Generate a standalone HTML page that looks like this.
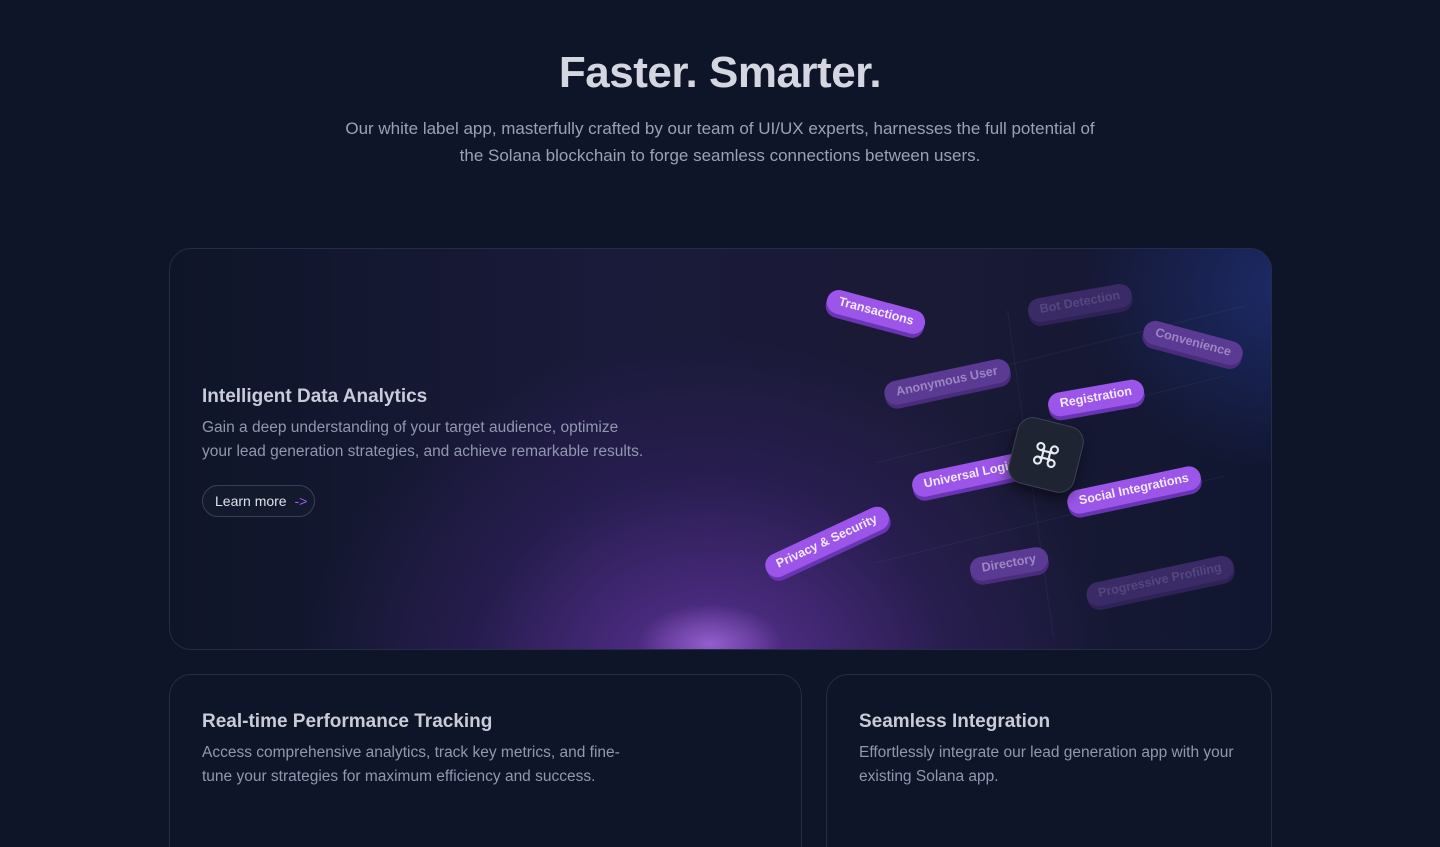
<!DOCTYPE html>
<html><head><meta charset="utf-8"><style>
*{margin:0;padding:0;box-sizing:border-box}
html,body{width:1440px;height:847px;overflow:hidden}
body{background:#0f1528;font-family:"Liberation Sans",Arial,sans-serif;position:relative}
h1{position:absolute;top:48px;left:0;width:1440px;text-align:center;font-size:44px;font-weight:700;color:#d4d6e2;letter-spacing:-0.5px}
.sub{position:absolute;top:115px;left:0;width:1440px;text-align:center;font-size:17px;line-height:27px;color:#9aa0b8}
.card{position:absolute;border:1px solid #262c44;border-radius:22px;overflow:hidden;background:#0f1528}
.big{left:169px;top:248px;width:1103px;height:402px;
background:
radial-gradient(ellipse 300px 260px at 1120px 40px,rgba(40,60,150,.55),transparent 70%),
radial-gradient(ellipse 90px 50px at 540px 395px,rgba(180,120,240,.65),transparent 80%),
radial-gradient(ellipse 480px 400px at 540px 430px,rgba(110,55,175,.8),rgba(60,35,115,.4) 50%,transparent 85%),
linear-gradient(90deg,#0f1528 0%,#1a1a3a 40%,#1a1a36 70%,#101630 100%)}
.t{position:absolute;font-weight:700;font-size:19px;color:#c9cbd8}
.d{position:absolute;font-size:15.5px;line-height:24px;color:#9297b0}
.btn{position:absolute;left:32px;top:236px;width:113px;height:32px;border:1px solid #3a3f58;border-radius:16px;color:#e0e2ea;font-size:14px;line-height:30px;padding-left:12px;background:#131a2e}
.btn span{color:#9b5cf0;margin-left:4px}
.pill{position:absolute;height:24px;line-height:23px;padding:0 12px;border-radius:12px;background:#9b55e8;color:#f3eaff;font-size:12.5px;font-weight:700;white-space:nowrap;box-shadow:0 4px 0 #6a35b5;transform:translate(-50%,-50%) rotate(var(--r))}
.f1{background:#5b3a94;color:#9d86c4;box-shadow:0 4px 0 #4a2c7c}
.f2{background:#3a2a66;color:#54477e;box-shadow:0 4px 0 #2e2256}
.ln{position:absolute;background:rgba(120,130,170,.1)}
.icon{position:absolute;left:842px;top:172px;width:68px;height:68px;border-radius:16px;background:#1e2432;border:1px solid #3a4156;transform:rotate(14deg);box-shadow:0 6px 14px rgba(0,0,0,.5);display:flex;align-items:center;justify-content:center}
</style></head><body>
<h1>Faster. Smarter.</h1>
<div class="sub">Our white label app, masterfully crafted by our team of UI/UX experts, harnesses the full potential of<br>the Solana blockchain to forge seamless connections between users.</div>

<div class="card big">
<div class="t" style="left:32px;top:137px">Intelligent Data Analytics</div>
<div class="d" style="left:32px;top:167px">Gain a deep understanding of your target audience, optimize<br>your lead generation strategies, and achieve remarkable results.</div>
<div class="btn">Learn more <span>-&gt;</span></div>

<div class="ln" style="left:860px;top:60px;width:1px;height:330px;transform:rotate(-8deg)"></div>
<div class="ln" style="left:700px;top:170px;width:360px;height:1px;transform:rotate(-14deg)"></div>
<div class="ln" style="left:700px;top:270px;width:360px;height:1px;transform:rotate(-14deg)"></div>
<div class="ln" style="left:720px;top:100px;width:360px;height:1px;transform:rotate(-14deg)"></div>

<div class="pill" style="left:706px;top:63px;--r:15deg">Transactions</div>
<div class="pill f2" style="left:910px;top:54px;--r:-10deg">Bot Detection</div>
<div class="pill f1" style="left:1023px;top:94px;--r:15deg">Convenience</div>
<div class="pill f1" style="left:777px;top:133px;--r:-12deg">Anonymous User</div>
<div class="pill" style="left:926px;top:149px;--r:-10deg">Registration</div>
<div class="pill" style="left:800px;top:226px;--r:-12deg">Universal Login</div>
<div class="pill" style="left:964px;top:241px;--r:-12deg">Social Integrations</div>
<div class="pill" style="left:657px;top:293px;--r:-25deg">Privacy &amp; Security</div>
<div class="pill f1" style="left:839px;top:315px;--r:-10deg">Directory</div>
<div class="pill f2" style="left:990px;top:332px;--r:-12deg">Progressive Profiling</div>
<div class="icon"><svg width="28" height="28" viewBox="0 0 24 24" fill="none" stroke="#e8eaf0" stroke-width="1.8"><path d="M9 6v12M15 6v12M6 9h12M6 15h12"/><circle cx="6" cy="6" r="3"/><circle cx="18" cy="6" r="3"/><circle cx="6" cy="18" r="3"/><circle cx="18" cy="18" r="3"/></svg></div>
</div>

<div class="card" style="left:169px;top:674px;width:633px;height:200px">
<div class="t" style="left:32px;top:36px">Real-time Performance Tracking</div>
<div class="d" style="left:32px;top:66px">Access comprehensive analytics, track key metrics, and fine-<br>tune your strategies for maximum efficiency and success.</div>
</div>
<div class="card" style="left:826px;top:674px;width:446px;height:200px">
<div class="t" style="left:32px;top:36px">Seamless Integration</div>
<div class="d" style="left:32px;top:66px">Effortlessly integrate our lead generation app with your<br>existing Solana app.</div>
</div>
</body></html>
